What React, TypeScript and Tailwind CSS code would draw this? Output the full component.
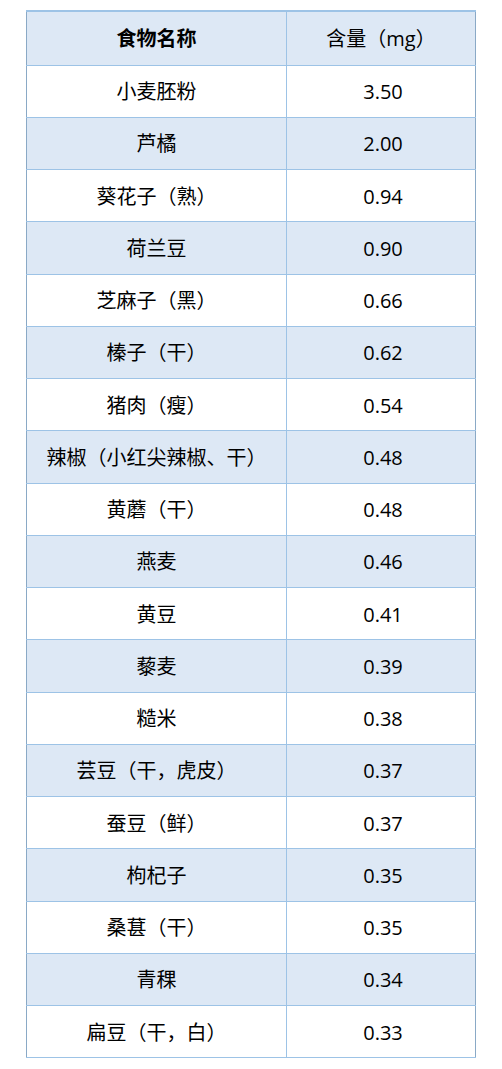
import React from "react";

const rows: [string, string][] = [
  ["小麦胚粉", "3.50"],
  ["芦橘", "2.00"],
  ["葵花子（熟）", "0.94"],
  ["荷兰豆", "0.90"],
  ["芝麻子（黑）", "0.66"],
  ["榛子（干）", "0.62"],
  ["猪肉（瘦）", "0.54"],
  ["辣椒（小红尖辣椒、干）", "0.48"],
  ["黄蘑（干）", "0.48"],
  ["燕麦", "0.46"],
  ["黄豆", "0.41"],
  ["藜麦", "0.39"],
  ["糙米", "0.38"],
  ["芸豆（干，虎皮）", "0.37"],
  ["蚕豆（鲜）", "0.37"],
  ["枸杞子", "0.35"],
  ["桑葚（干）", "0.35"],
  ["青稞", "0.34"],
  ["扁豆（干，白）", "0.33"],
];

export default function App() {
  return (
    <div className="w-[502px] h-[1069px] bg-white pt-[10px] pl-[26px] font-['Open_Sans','Noto_Sans_CJK_SC',sans-serif] text-[20px] text-black">
      <table className="w-[450px] border-collapse border-t-2 border-l border-r border-b border-t-[#9dc3e6] border-l-[#8aa9c6] border-r-[#8aa9c6] border-b-[#8aa9c6]">
        <thead>
          <tr className="h-[54px] bg-[#dde8f5]">
            <th className="w-[260px] border-r border-b border-[#9dc3e6] font-bold text-center p-0 pt-[2px]">食物名称</th>
            <th className="border-b border-[#9dc3e6] font-normal text-center p-0 pt-[2px]">含量（mg）</th>
          </tr>
        </thead>
        <tbody>
          {rows.map(([n, v], i) => (
            <tr key={i} className={"h-[52.26px] " + (i % 2 === 1 ? "bg-[#dde8f5]" : "bg-white")}>
              <td className="border-r border-b border-[#9dc3e6] text-center p-0 pt-[2px]">{n}</td>
              <td className="border-b border-[#9dc3e6] text-center p-0 pt-[2px] pl-[4px]">{v}</td>
            </tr>
          ))}
        </tbody>
      </table>
    </div>
  );
}
